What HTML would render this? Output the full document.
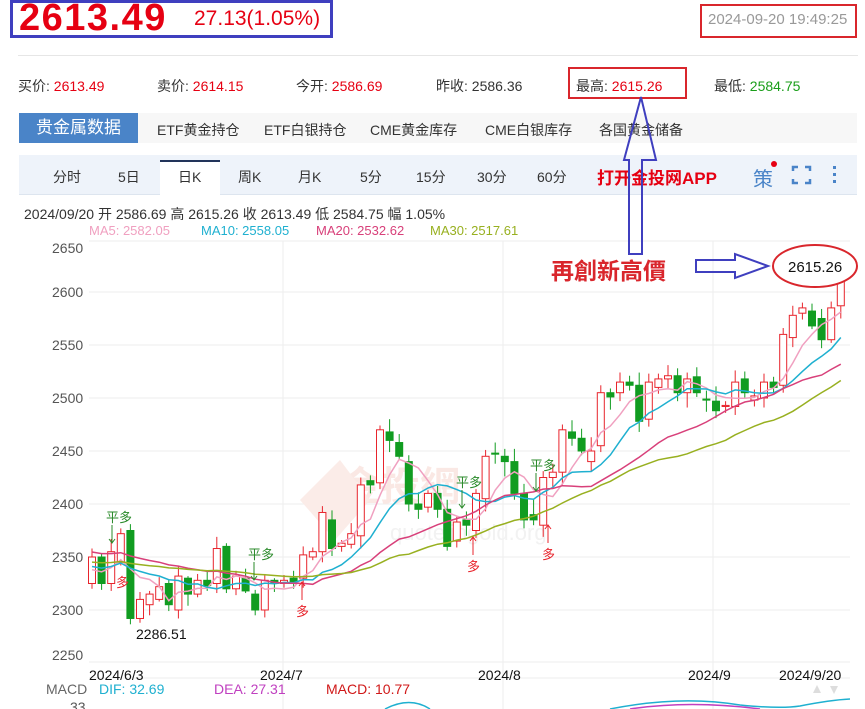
<!DOCTYPE html>
<html><head><meta charset="utf-8">
<style>
*{margin:0;padding:0;box-sizing:border-box}
body{width:865px;height:709px;overflow:hidden;background:#fff;font-family:"Liberation Sans","Noto Sans CJK SC",sans-serif;position:relative;color:#333}
.a{position:absolute;white-space:nowrap}
</style></head><body>
<div class="a" style="left:10px;top:0px;width:323px;height:38px;border:3px solid #3f3fbf"></div>
<div class="a" style="left:19px;top:-1px;font-size:38px;line-height:38px;font-weight:bold;color:#e60012;letter-spacing:1.5px">2613.49</div>
<div class="a" style="left:194px;top:7px;font-size:21px;color:#e60012">27.13(1.05%)</div>
<div class="a" style="left:700px;top:4px;width:157px;height:34px;border:2px solid #d9262c"></div>
<div class="a" style="left:708px;top:11px;font-size:15px;color:#999">2024-09-20 19:49:25</div>
<div class="a" style="left:18px;top:55px;width:840px;height:1px;background:#e6e6e6"></div>
<div class="a" style="left:18px;top:76px;font-size:14px">买价: <span style="color:#e60012">2613.49</span></div>
<div class="a" style="left:157px;top:76px;font-size:14px">卖价: <span style="color:#e60012">2614.15</span></div>
<div class="a" style="left:296px;top:76px;font-size:14px">今开: <span style="color:#e60012">2586.69</span></div>
<div class="a" style="left:436px;top:76px;font-size:14px">昨收: 2586.36</div>
<div class="a" style="left:568px;top:67px;width:119px;height:32px;border:2px solid #d9262c"></div>
<div class="a" style="left:576px;top:76px;font-size:14px">最高: <span style="color:#e60012">2615.26</span></div>
<div class="a" style="left:714px;top:76px;font-size:14px">最低: <span style="color:#1a9e1a">2584.75</span></div>
<div class="a" style="left:19px;top:113px;width:838px;height:30px;background:#f7f7f7"></div>
<div class="a" style="left:19px;top:113px;width:119px;height:30px;background:#4a84c8;color:#fff;font-size:17px;line-height:30px;text-align:center">贵金属数据</div>
<div class="a" style="left:157px;top:120px;font-size:14px">ETF黄金持仓</div>
<div class="a" style="left:264px;top:120px;font-size:14px">ETF白银持仓</div>
<div class="a" style="left:370px;top:120px;font-size:14px">CME黄金库存</div>
<div class="a" style="left:485px;top:120px;font-size:14px">CME白银库存</div>
<div class="a" style="left:599px;top:120px;font-size:14px">各国黄金储备</div>
<div class="a" style="left:19px;top:155px;width:838px;height:40px;background:#eef3fa;border-bottom:1px solid #dde5ef"></div>
<div class="a" style="left:160px;top:160px;width:60px;height:36px;background:#fff;border-top:2px solid #22345a"></div>
<div class="a" style="top:167px;left:53px;font-size:14px">分时</div>
<div class="a" style="top:167px;left:118px;font-size:14px">5日</div>
<div class="a" style="top:167px;left:178px;font-size:14px">日K</div>
<div class="a" style="top:167px;left:238px;font-size:14px">周K</div>
<div class="a" style="top:167px;left:298px;font-size:14px">月K</div>
<div class="a" style="top:167px;left:360px;font-size:14px">5分</div>
<div class="a" style="top:167px;left:416px;font-size:14px">15分</div>
<div class="a" style="top:167px;left:477px;font-size:14px">30分</div>
<div class="a" style="top:167px;left:537px;font-size:14px">60分</div>
<div class="a" style="top:164px;left:597px;font-size:17px;font-weight:bold;color:#e60012">打开金投网APP</div>
<div class="a" style="top:163px;left:753px;font-size:20px;color:#4a84c8">策</div>
<div class="a" style="top:161px;left:771px;width:6px;height:6px;border-radius:3px;background:#e60012"></div>
<svg class="a" style="left:790px;top:164px" width="60" height="24"><g stroke="#4a84c8" stroke-width="2.5" fill="none"><path d="M3 7V3h5M15 3h5v4M3 15v4h5M15 19h5v-4"/></g><g fill="#4a84c8"><rect x="43" y="2" width="3" height="3"/><rect x="43" y="9" width="3" height="3"/><rect x="43" y="16" width="3" height="3"/></g></svg>
<div class="a" style="top:204px;left:24px;font-size:14px">2024/09/20 开 2586.69 高 2615.26 收 2613.49 低 2584.75 幅 1.05%</div>
<div class="a" style="top:223px;left:89px;font-size:13px;color:#f0a0c0">MA5: 2582.05</div>
<div class="a" style="top:223px;left:201px;font-size:13px;color:#1fb0d0">MA10: 2558.05</div>
<div class="a" style="top:223px;left:316px;font-size:13px;color:#d8407a">MA20: 2532.62</div>
<div class="a" style="top:223px;left:430px;font-size:13px;color:#98b020">MA30: 2517.61</div>
<svg id="c" class="a" style="left:0;top:0" width="865" height="709" font-family="Liberation Sans, Noto Sans CJK SC, sans-serif"></svg>
<script>
var S='';
function Y(p){return 398-(p-2500)*1.06;}
[2650,2600,2550,2500,2450,2400,2350,2300,2250].forEach(function(p){var y=Y(p);if(p==2250)y=662;if(p==2650)y=241;S+='<line x1="89" x2="850" y1="'+y+'" y2="'+y+'" stroke="#eee"/>';S+='<text x="52" y="'+((p==2650?248:p==2250?655:y)+5)+'" font-size="14" fill="#555">'+p+'</text>';});
[283,503,713].forEach(function(x){S+='<line x1="'+x+'" x2="'+x+'" y1="241" y2="709" stroke="#eee"/>';});
S+='<line x1="89" x2="850" y1="678" y2="678" stroke="#eee"/>';
S+='<text x="340" y="500" font-size="40" fill="#fae8e4" font-weight="bold">金投網</text><text x="390" y="540" font-size="22" fill="#f2f2f2">quotejingold.org</text><path d="M300 500 L340 460 L370 500 L335 540Z" fill="#fbece8"/>';
var d=[[2325,2350],[2350,2325],[2325,2355],[2345,2372],[2375,2292],[2292,2310],[2305,2315],[2310,2322],[2325,2305],[2300,2332],[2330,2315],[2315,2328],[2328,2323],[2325,2358],[2360,2320],[2320,2332],[2330,2318],[2315,2300],[2300,2328],[2328,2325],[2325,2328],[2330,2326],[2330,2352],[2350,2355],[2355,2392],[2385,2358],[2360,2363],[2362,2372],[2370,2418],[2422,2418],[2420,2470],[2468,2460],[2458,2445],[2440,2400],[2400,2395],[2397,2410],[2410,2395],[2395,2360],[2365,2383],[2385,2380],[2375,2410],[2405,2445],[2448,2447],[2445,2440],[2440,2410],[2410,2385],[2390,2385],[2380,2425],[2425,2430],[2430,2470],[2468,2462],[2462,2450],[2440,2450],[2455,2505],[2505,2501],[2505,2515],[2515,2512],[2512,2478],[2480,2515],[2510,2518],[2518,2521],[2521,2505],[2505,2518],[2520,2505],[2499,2498],[2497,2488],[2492,2493],[2492,2515],[2518,2505],[2498,2502],[2500,2515],[2515,2510],[2512,2560],[2557,2578],[2580,2585],[2582,2568],[2575,2555],[2555,2585],[2587,2613]];
var w=[8,3,12,5,6,7,3,9,4,10,2,6,8,11,3,5,9,4,6,2,5,7,8,4,6,9,3,10,7,5,4,12,8,6,11,3,7,9,5,8,4,6,10,7,12,9,14,6,8,5,11,9,13,7,4,9,6,12,8,5,10,7,6,9,8,14,4,11,7,6,8,5,6,9,5,7,9,6,3];
var cl=d.map(function(e){return e[1]});
for(var i=0;i<d.length;i++){var o=d[i][0],c=d[i][1],x=92+i*9.6;var hi=Math.max(o,c)+w[i],lo=Math.min(o,c)-w[(i+3)%w.length];if(i==78)hi=2615.26;if(i==4)lo=2286.51;var up=c>=o,col=up?'#e8242c':'#119c21';
S+='<line x1="'+x+'" x2="'+x+'" y1="'+Y(hi)+'" y2="'+Y(lo)+'" stroke="'+col+'"/>';var t=Y(Math.max(o,c)),b=Y(Math.min(o,c));if(b-t<1)b=t+1;
S+='<rect x="'+(x-3.5)+'" y="'+t+'" width="7" height="'+(b-t)+'" fill="'+(up?'#fff':col)+'" stroke="'+col+'"/>';}
function ma(n,col,base){var p='';for(var i=0;i<cl.length;i++){var s=0,k=0;for(var j=Math.max(0,i-n+1);j<=i;j++){s+=cl[j];k++}var v=s/k;if(i<n){v=(s+base*(n-k))/n}p+=(i?'L':'M')+(92+i*9.6).toFixed(1)+' '+Y(v).toFixed(1);}S+='<path d="'+p+'" fill="none" stroke="'+col+'" stroke-width="1.5"/>';}
ma(5,'#f0a0c0',2335);ma(10,'#1fb0d0',2340);ma(20,'#d8407a',2355);ma(30,'#98b020',2345);
S+='<text x="136" y="639" font-size="14" fill="#111">2286.51</text>';
function pd(x,y){S+='<text x="'+x+'" y="'+y+'" font-size="13" fill="#2a8a2a">平多</text><path d="M'+(x+6)+' '+(y+3)+'v18M'+(x+3)+' '+(y+17)+'l3 4 3-4" stroke="#2a8a2a" fill="none"/>';}
function du(x,y){S+='<path d="M'+x+' '+y+'v-18M'+(x-3)+' '+(y-14)+'l3-4 3 4" stroke="#e8242c" fill="none"/><text x="'+(x-6)+'" y="'+(y+16)+'" font-size="13" fill="#e8242c">多</text>';}
pd(106,522);pd(248,559);pd(456,487);pd(530,470);
S+='<text x="116" y="587" font-size="13" fill="#e8242c">多</text>';du(302,600);du(473,555);du(548,543);
S+='<text x="89" y="680" font-size="14" fill="#111">2024/6/3</text><text x="260" y="680" font-size="14" fill="#111">2024/7</text><text x="478" y="680" font-size="14" fill="#111">2024/8</text><text x="688" y="680" font-size="14" fill="#111">2024/9</text><text x="779" y="680" font-size="14" fill="#111">2024/9/20</text>';
S+='<text x="46" y="694" font-size="14" fill="#666">MACD</text><text x="99" y="694" font-size="14" fill="#1fb0d0">DIF: 32.69</text><text x="214" y="694" font-size="14" fill="#c040c0">DEA: 27.31</text><text x="326" y="694" font-size="14" fill="#d01818">MACD: 10.77</text><text x="70" y="712" font-size="14" fill="#555">33</text>';
S+='<path d="M385 709Q410 696 430 709M610 709Q680 695 740 705Q780 709 800 706Q830 700 850 699" stroke="#1fb0d0" fill="none" stroke-width="1.5"/><path d="M630 709Q690 700 760 709" stroke="#c040c0" fill="none" stroke-width="1.5"/>';
S+='<path d="M813 693l4-8 4 8zM830 686l4 8 4-8z" fill="#ddd"/>';
S+='<path d="M629 254V160H624L641 97L656 160H642V254Z" fill="none" stroke="#3f3fbf" stroke-width="2"/>';
S+='<path d="M696 260H735V254L768 266L735 278V272H696Z" fill="none" stroke="#3f3fbf" stroke-width="2"/>';
S+='<text x="551" y="279" font-size="23" font-weight="bold" fill="#d9262c">再創新高價</text>';
S+='<ellipse cx="815" cy="266" rx="42" ry="21" fill="#fff" stroke="#d9262c" stroke-width="2"/><text x="788" y="272" font-size="15" fill="#111">2615.26</text>';
document.getElementById('c').innerHTML=S;
</script>
</body></html>
